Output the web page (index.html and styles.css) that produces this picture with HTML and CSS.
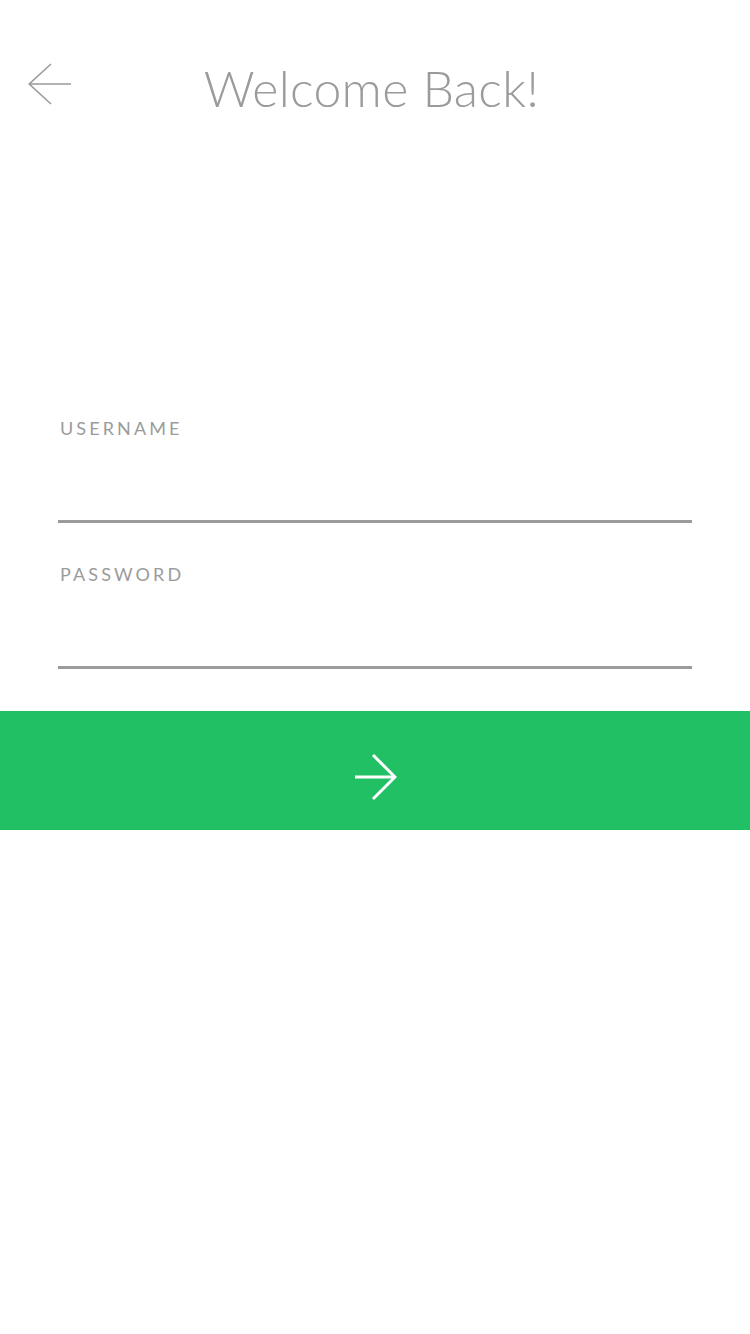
FILE: index.html
```html
<!DOCTYPE html>
<html>
<head>
<meta charset="utf-8">
<link rel="stylesheet" href="styles.css">
</head>
<body>
<div class="screen">
  <header class="header">
    <button class="back" aria-label="Back">
      <svg width="44" height="42" viewBox="0 0 44 42" fill="none" stroke="#9b9b9b" stroke-width="1.6">
        <path d="M43 21H1.2M23 1L1.2 21L23 41"/>
      </svg>
    </button>
    <h1 class="title">Welcome Back!</h1>
    <div class="spacer"></div>
  </header>
  <form class="form">
    <label class="field">
      <span class="label">USERNAME</span>
      <span class="input"></span>
    </label>
    <label class="field">
      <span class="label">PASSWORD</span>
      <span class="input"></span>
    </label>
  </form>
  <button class="submit" aria-label="Log in">
    <svg width="44" height="48" viewBox="0 0 44 48" fill="none" stroke="#ffffff" stroke-width="3">
      <path d="M2 24H42M20 2L42 24L20 46"/>
    </svg>
  </button>
</div>
</body>
</html>
```
FILE: styles.css
```css
html, body {
  margin: 0;
  padding: 0;
  background: #ffffff;
}
.screen {
  width: 750px;
  min-height: 1334px;
  font-family: Lato, "Noto Sans", sans-serif;
  color: #9b9b9b;
}
.header {
  display: grid;
  grid-template-columns: 1fr auto 1fr;
  align-items: start;
  height: 170px;
  padding: 0 7px 0 0;
}
.back {
  justify-self: start;
  background: none;
  border: 0;
  padding: 0;
  width: 44px;
  height: 42px;
  margin: 63px 0 0 28px;
}
.back svg { display: block; }
.title {
  margin: 63px 0 0 0;
  font-weight: 300;
  font-size: 50px;
  letter-spacing: 0.3px;
  color: #9b9b9b;
  line-height: 1;
}
.form {
  display: flex;
  flex-direction: column;
  padding: 248px 58px 0 58px;
  gap: 41px;
}
.field {
  display: flex;
  flex-direction: column;
}
.label {
  font-size: 18px;
  letter-spacing: 3.1px;
  padding-left: 2px;
  line-height: 20px;
}
.input {
  display: block;
  height: 82px;
  border-bottom: 3px solid #9b9b9b;
}
.submit {
  display: flex;
  align-items: center;
  justify-content: center;
  width: 100%;
  height: 119px;
  margin-top: 42px;
  border: 0;
  padding: 0;
  background: #22c064;
}
.submit svg {
  display: block;
  margin-top: 13px;
}
```
